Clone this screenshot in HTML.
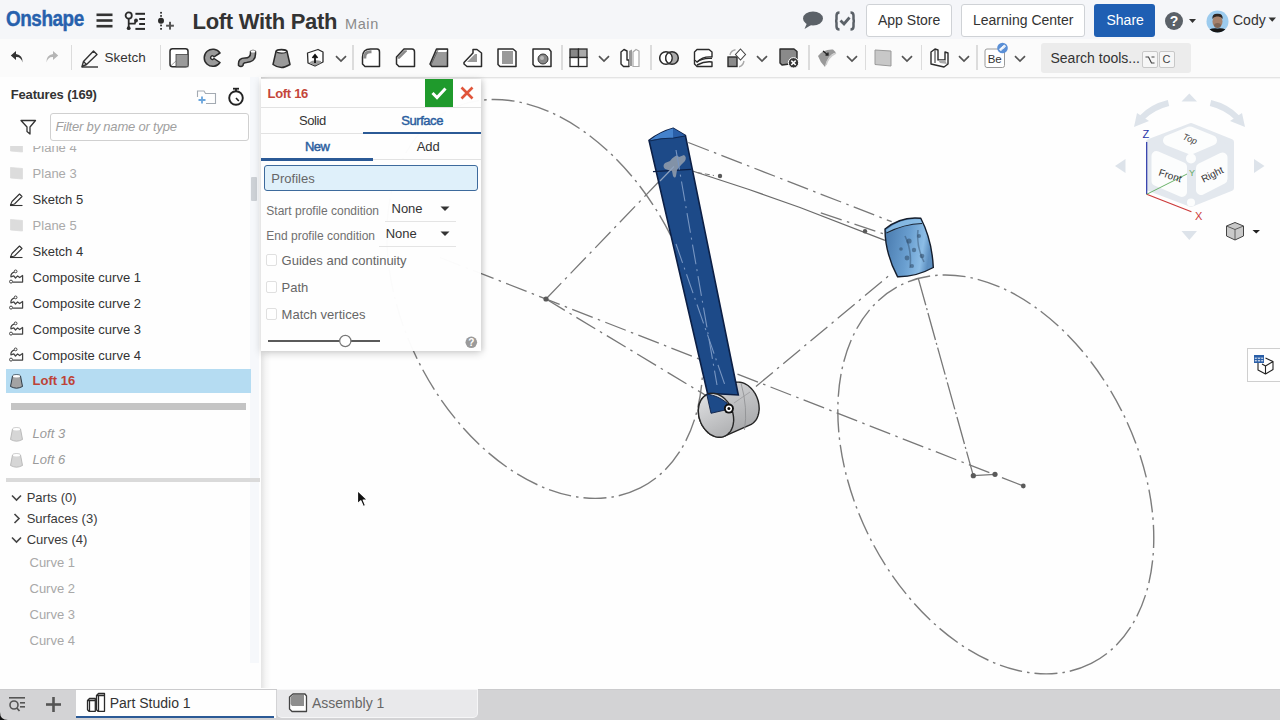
<!DOCTYPE html><html><head><meta charset="utf-8"><style>
*{margin:0;padding:0;box-sizing:border-box}
html,body{width:1280px;height:720px;overflow:hidden;background:#fefefe;font-family:"Liberation Sans", sans-serif;}
.t{position:absolute;white-space:nowrap;}
</style></head><body>

<svg style="position:absolute;left:0;top:0" width="1280" height="720" viewBox="0 0 1280 720"><ellipse cx="544.8" cy="298.9" rx="211.8" ry="141" transform="rotate(63.2 544.8 298.9)" fill="none" stroke="#7c7c7c" stroke-width="1.4" stroke-dasharray="23 5 2.5 5"/><ellipse cx="995.8" cy="474.4" rx="211.8" ry="141" transform="rotate(63.2 995.8 474.4)" fill="none" stroke="#7c7c7c" stroke-width="1.4" stroke-dasharray="23 5 2.5 5"/><line x1="440" y1="257.5" x2="1023.3" y2="486" stroke="#777" stroke-width="1.3" stroke-dasharray="22 5.5 2.5 5.5"/><line x1="546" y1="299" x2="728.7" y2="409.2" stroke="#777" stroke-width="1.3" stroke-dasharray="22 5.5 2.5 5.5"/><line x1="546" y1="299" x2="673" y2="167" stroke="#777" stroke-width="1.3" stroke-dasharray="22 5.5 2.5 5.5"/><line x1="688.3" y1="142.5" x2="891.7" y2="221.7" stroke="#777" stroke-width="1.3" stroke-dasharray="22 5.5 2.5 5.5"/><polyline points="692.5,171 749,189.5 800,207.5 885,240.4" fill="none" stroke="#6a6a6a" stroke-width="1.3"/><line x1="697" y1="172.5" x2="714" y2="175.5" stroke="#777" stroke-width="1" stroke-dasharray="5 3"/><line x1="820.8" y1="212.9" x2="890" y2="236" stroke="#777" stroke-width="1.3" stroke-dasharray="22 5.5 2.5 5.5"/><line x1="728.7" y1="409.2" x2="891.7" y2="273.3" stroke="#777" stroke-width="1.3" stroke-dasharray="22 5.5 2.5 5.5"/><line x1="918.3" y1="278.3" x2="973.3" y2="475.7" stroke="#777" stroke-width="1.3" stroke-dasharray="28 3 2 3"/><line x1="973.3" y1="475.7" x2="995" y2="474.3" stroke="#777" stroke-width="1.3" stroke-dasharray="none"/><circle cx="546" cy="299" r="2.6" fill="#5a5a5a"/><circle cx="720" cy="176" r="2.2" fill="#5a5a5a"/><circle cx="865" cy="231.25" r="2.2" fill="#5a5a5a"/><circle cx="973.3" cy="475.7" r="2.6" fill="#5a5a5a"/><circle cx="995" cy="474.3" r="2.6" fill="#5a5a5a"/><circle cx="1023.3" cy="486" r="2.4" fill="#5a5a5a"/><defs><linearGradient id="cyl" x1="0" y1="0" x2="0.3" y2="1"><stop offset="0" stop-color="#d6d7d9"/><stop offset="1" stop-color="#a8a9ab"/></linearGradient><linearGradient id="cyf" x1="0" y1="0" x2="0.4" y2="1"><stop offset="0" stop-color="#e2e3e5"/><stop offset="1" stop-color="#b4b5b7"/></linearGradient></defs><path d="M698.3 410.7 L698.4 409.2 L698.6 407.8 L698.8 406.3 L699.1 405.0 L699.5 403.6 L700.0 402.4 L700.5 401.2 L701.1 400.0 L701.8 399.0 L702.6 398.0 L703.5 397.1 L704.3 396.3 L705.3 395.6 L706.3 394.9 L707.4 394.4 L732.9 383.1 L734.0 382.7 L735.1 382.4 L736.2 382.2 L737.4 382.1 L738.6 382.1 L739.9 382.2 L741.1 382.4 L742.3 382.7 L743.6 383.1 L744.8 383.7 L746.0 384.3 L747.2 385.0 L748.3 385.8 L749.4 386.7 L750.5 387.7 L751.5 388.8 L752.5 389.9 L753.5 391.1 L754.3 392.4 L755.2 393.7 L755.9 395.1 L756.6 396.5 L757.2 398.0 L757.7 399.5 L758.2 401.0 L758.5 402.5 L758.8 404.0 L759.0 405.6 L759.1 407.1 L759.2 408.6 L759.1 410.1 L758.9 411.5 L758.7 413.0 L758.4 414.3 L758.0 415.7 L757.5 416.9 L757.0 418.1 L756.4 419.3 L755.7 420.3 L754.9 421.3 L754.0 422.2 L753.2 423.0 L752.2 423.7 L751.2 424.4 L750.1 424.9 L724.6 436.2 L723.5 436.6 L722.4 436.9 L721.3 437.1 L720.1 437.2 L718.9 437.2 L717.6 437.1 L716.4 436.9 L715.2 436.6 L713.9 436.2 L712.7 435.6 L711.5 435.0 L710.3 434.3 L709.2 433.5 L708.1 432.6 L707.0 431.6 L706.0 430.5 L705.0 429.4 L704.0 428.2 L703.2 426.9 L702.3 425.6 L701.6 424.2 L700.9 422.8 L700.3 421.3 L699.8 419.8 L699.3 418.3 L699.0 416.8 L698.7 415.3 L698.5 413.7 L698.4 412.2 Z" fill="url(#cyl)" stroke="#262626" stroke-width="1.4"/><path d="M741 383 Q748 408 744.5 430" fill="none" stroke="#8d8e90" stroke-width="0.8"/><path d="M734 403 L750 392" fill="none" stroke="#9a9b9d" stroke-width="0.8"/><path d="M649 140.4 Q660 132 673.3 128.3 L685.4 135.4 L738.3 395 L707.5 393.3 Z" fill="#1d4a88" stroke="#0c1f45" stroke-width="1.6"/><path d="M649.5 140.4 Q660 132 673.3 128.3 L673.5 138 Q660 138 649.5 140.4 Z" fill="#4482cc"/><path d="M673.3 128.3 L685.4 135.4 L673.5 138 Z" fill="#2a5fa8"/><path d="M649.5 141 Q661 138 673.5 138 L685 136" fill="none" stroke="#0f2a55" stroke-width="1.2"/><path d="M653 171.6 L691 169.3" stroke="#0c1f45" stroke-width="1.3"/><path d="M684 155 Q687 157 685 161 L682 164 Q679 167 677 170 L676 176 Q675 179 673 176 L672 171 Q668 170 665 169 Q662 166 665 163 L670 161 Q672 158 674 157 Q677 154 679 157 Z" fill="#8e9aab" opacity="0.9"/><line x1="660" y1="181" x2="674" y2="166.5" stroke="#8fa3bf" stroke-width="1.1"/><line x1="676" y1="150" x2="717" y2="385" stroke="#7896c2" stroke-width="1.1" stroke-dasharray="20 5 2 5"/><line x1="676" y1="244" x2="726" y2="388" stroke="#7896c2" stroke-width="1.1" stroke-dasharray="20 5 2 5"/><path d="M731.7 409.3 L732.2 410.8 L732.7 412.3 L733.0 413.8 L733.3 415.3 L733.5 416.9 L733.6 418.4 L733.7 419.9 L733.6 421.4 L733.4 422.8 L733.2 424.3 L732.9 425.6 L732.5 427.0 L732.0 428.2 L731.5 429.4 L730.9 430.6 L730.2 431.6 L729.4 432.6 L728.5 433.5 L727.7 434.3 L726.7 435.0 L725.7 435.7 L724.6 436.2 L723.5 436.6 L722.4 436.9 L721.3 437.1 L720.1 437.2 L718.9 437.2 L717.6 437.1 L716.4 436.9 L715.2 436.6 L713.9 436.2 L712.7 435.6 L711.5 435.0 L710.3 434.3 L709.2 433.5 L708.1 432.6 L707.0 431.6 L706.0 430.5 L705.0 429.4 L704.0 428.2 L703.2 426.9 L702.3 425.6 L701.6 424.2 L700.9 422.8 L700.3 421.3 L699.8 419.8 L699.3 418.3 L699.0 416.8 L698.7 415.3 L698.5 413.7 L698.4 412.2 L698.3 410.7 L698.4 409.2 L698.6 407.8 L698.8 406.3 L699.1 405.0 L699.5 403.6 L700.0 402.4 L700.5 401.2 L701.1 400.0 L701.8 399.0 L702.6 398.0 L703.5 397.1 L704.3 396.3 L705.3 395.6 L706.3 394.9 L707.4 394.4 L708.5 394.0 L709.6 393.7 L710.7 393.5 L711.9 393.4 L713.1 393.4 L714.4 393.5 L715.6 393.7 L716.8 394.0 L718.1 394.4 L719.3 395.0 L720.5 395.6 L721.7 396.3 L722.8 397.1 L723.9 398.0 L725.0 399.0 L726.0 400.1 L727.0 401.2 L728.0 402.4 L728.8 403.7 L729.7 405.0 L730.4 406.4 L731.1 407.8 Z" fill="url(#cyf)" stroke="#262626" stroke-width="1.4"/><path d="M706.7 394 Q718 395.5 727 403 L728.7 409.2 L711 413.3 Z" fill="#1d4a88" stroke="#0c1f45" stroke-width="0.9"/><circle cx="728.9" cy="408.6" r="5" fill="#111"/><circle cx="728.9" cy="408.6" r="3.1" fill="#fff"/><circle cx="728.9" cy="408.6" r="1.5" fill="#111"/><defs><linearGradient id="bg1" x1="0" y1="0" x2="1" y2="0.2"><stop offset="0" stop-color="#4677ab"/><stop offset="0.55" stop-color="#6a9fd0"/><stop offset="0.85" stop-color="#8cbde6"/><stop offset="1" stop-color="#5d8fc0"/></linearGradient></defs><path d="M885 229 Q901 216 920.8 218.3 Q932 240 933.3 267.5 Q916 277 897.5 276.7 Q885 253 885 229 Z" fill="url(#bg1)" stroke="#141d2c" stroke-width="1.4"/><path d="M886 230 Q901 217.5 920 219.5 Q921.5 222 922 224 Q904 224 887.5 233.5 Z" fill="#8fc2ea" opacity="0.8"/><path d="M886.5 233 Q904 224 922 223.5" fill="none" stroke="#1a2536" stroke-width="1.2"/><g fill="#2f4a66" opacity="0.55"><circle cx="909" cy="241" r="2.6"/><circle cx="914" cy="250" r="2.2"/><circle cx="907" cy="258" r="2.4"/><circle cx="919" cy="236" r="2"/><circle cx="922" cy="256" r="2.3"/><circle cx="912" cy="266" r="2"/><circle cx="901" cy="249" r="1.8"/></g><path d="M905 236 Q912 250 910 268 M918 230 Q916 246 924 262" fill="none" stroke="#2f4a66" stroke-width="1.6" opacity="0.45"/></svg>
<div style="position:absolute;left:0px;top:0px;width:1280px;height:39px;background:#f5f6f9;"></div>
<div class="t" style="left:6.0px;top:8.22px;font-size:21px;line-height:21px;color:#2761ad;font-weight:bold;font-style:normal;letter-spacing:-0.5px;-webkit-text-stroke:0.4px #2761ad;transform:scale(0.9,1.08);transform-origin:0 21px;">Onshape</div>
<svg style="position:absolute;left:96px;top:13px;" width="17" height="15" viewBox="0 0 17 15"><rect x="0.5" y="0.5" width="16" height="2.6" fill="#333"/><rect x="0.5" y="6.2" width="16" height="2.6" fill="#333"/><rect x="0.5" y="11.9" width="16" height="2.6" fill="#333"/></svg>
<svg style="position:absolute;left:124px;top:11px;" width="23" height="20" viewBox="0 0 23 20"><circle cx="4.7" cy="4.5" r="3.1" fill="none" stroke="#2a2a2a" stroke-width="1.8"/><path d="M4.7 7.5 L4.7 17" stroke="#2a2a2a" stroke-width="1.8"/><circle cx="4.7" cy="17.2" r="1.9" fill="#2a2a2a"/><path d="M4.7 12.6 L10.8 12.6 L11.8 9.5" fill="none" stroke="#2a2a2a" stroke-width="1.8"/><circle cx="12" cy="9.5" r="1.9" fill="#2a2a2a"/><rect x="11.4" y="1.8" width="9.6" height="2" fill="#2a2a2a"/><rect x="15.2" y="7" width="5.8" height="2" fill="#2a2a2a"/><rect x="15.2" y="12" width="5.8" height="2" fill="#2a2a2a"/><rect x="11.4" y="16.9" width="9.6" height="2" fill="#2a2a2a"/></svg>
<svg style="position:absolute;left:156px;top:10px;" width="20" height="21" viewBox="0 0 20 21"><circle cx="5" cy="10.8" r="3" fill="#2a2a2a"/><rect x="4.2" y="1.9" width="1.7" height="1.7" fill="#222"/><rect x="4.2" y="5.1" width="1.7" height="1.7" fill="#222"/><rect x="4.2" y="14.6" width="1.7" height="1.7" fill="#222"/><rect x="4.2" y="18" width="1.7" height="1.7" fill="#222"/><rect x="10.1" y="14.7" width="7.8" height="2" fill="#555"/><rect x="13" y="11.8" width="2" height="7.8" fill="#555"/></svg>
<div class="t" style="left:192.5px;top:10.78px;font-size:22px;line-height:22px;color:#333;font-weight:bold;font-style:normal;letter-spacing:-0.3px;">Loft With Path</div>
<div class="t" style="left:345.0px;top:16.93px;font-size:14.5px;line-height:14.5px;color:#8a8a8a;font-weight:normal;font-style:normal;letter-spacing:0.6px;">Main</div>
<svg style="position:absolute;left:802px;top:11px;" width="22" height="19" viewBox="0 0 22 19"><ellipse cx="11" cy="7.5" rx="10" ry="7" fill="#5b6168"/><path d="M5 12 L2.5 18 L10 13.5 Z" fill="#5b6168"/></svg>
<svg style="position:absolute;left:834px;top:11px;" width="22" height="20" viewBox="0 0 22 20"><path d="M5.5 1.5 Q2.5 1.5 2.5 4.5 L2.5 8 Q2.5 10 1 10 Q2.5 10 2.5 12 L2.5 15.5 Q2.5 18.5 5.5 18.5" fill="none" stroke="#5b6168" stroke-width="2.5"/><path d="M16.5 1.5 Q19.5 1.5 19.5 4.5 L19.5 8 Q19.5 10 21 10 Q19.5 10 19.5 12 L19.5 15.5 Q19.5 18.5 16.5 18.5" fill="none" stroke="#5b6168" stroke-width="2.5"/><path d="M6.5 9.5 L10 13 L15.5 6.5" fill="none" stroke="#5b6168" stroke-width="2.8"/></svg>
<div style="position:absolute;left:865.5px;top:3.5px;width:86px;height:33px;background:#fff;border:1px solid #cfd2d6;border-radius:3px;"></div>
<div class="t" style="left:878.0px;top:13.45px;font-size:14px;line-height:14px;color:#333;font-weight:normal;font-style:normal;">App Store</div>
<div style="position:absolute;left:960.5px;top:3.5px;width:124px;height:33px;background:#fff;border:1px solid #cfd2d6;border-radius:3px;"></div>
<div class="t" style="left:973.0px;top:13.45px;font-size:14px;line-height:14px;color:#333;font-weight:normal;font-style:normal;">Learning Center</div>
<div style="position:absolute;left:1093.5px;top:3.5px;width:61.5px;height:33px;background:#1f5fb3;border-radius:3px;"></div>
<div class="t" style="left:1106.5px;top:13.45px;font-size:14px;line-height:14px;color:#fff;font-weight:normal;font-style:normal;">Share</div>
<svg style="position:absolute;left:1164px;top:11px;" width="34" height="20" viewBox="0 0 34 20"><circle cx="10" cy="10" r="9" fill="#5b6168"/><text x="10" y="15" font-family="Liberation Sans" font-weight="bold" font-size="14" fill="#fff" text-anchor="middle">?</text><path d="M25 8 L32 8 L28.5 12 Z" fill="#333"/></svg>
<svg style="position:absolute;left:1206px;top:10px;" width="24" height="23" viewBox="0 0 24 23"><defs><clipPath id="av"><circle cx="11.5" cy="11.5" r="11"/></clipPath></defs><circle cx="11.5" cy="11.5" r="11" fill="#9ccbee"/><g clip-path="url(#av)"><ellipse cx="11.5" cy="11.5" rx="5" ry="6.5" fill="#a7826c"/><path d="M6.3 9 Q6 3.5 11.5 3.8 Q17 3.5 16.7 9 Q15 6 11.5 6.5 Q8 6 6.3 9 Z" fill="#2e2622"/><ellipse cx="11.5" cy="15.5" rx="3.5" ry="2.5" fill="#5a4a40" opacity="0.5"/><path d="M-1 24 Q2 17.5 11.5 18.5 Q21 17.5 24 24 Z" fill="#161616"/></g></svg>
<div class="t" style="left:1233.0px;top:13.45px;font-size:14px;line-height:14px;color:#333;font-weight:normal;font-style:normal;">Cody</div>
<svg style="position:absolute;left:1268px;top:17px;" width="9" height="6" viewBox="0 0 9 6"><path d="M0.5 0.5 L8 0.5 L4.25 4.8 Z" fill="#333"/></svg>
<div style="position:absolute;left:0px;top:39px;width:1280px;height:39px;background:#fbfbfb;border-bottom:1px solid #e4e4e4;box-shadow:0 1px 1px rgba(0,0,0,0.04);"></div>
<svg style="position:absolute;left:10px;top:50px;" width="15" height="15" viewBox="0 0 15 15"><path d="M6 1 L0.8 5.5 L6 10 L6 7 Q11 6.5 12.5 12.5 Q13 5 6 4 Z" fill="#333"/></svg>
<svg style="position:absolute;left:44px;top:50px;" width="15" height="15" viewBox="0 0 15 15"><path d="M9 1 L14.2 5.5 L9 10 L9 7 Q4 6.5 2.5 12.5 Q2 5 9 4 Z" fill="#b5b5b5"/></svg>
<div style="position:absolute;left:70.5px;top:45px;width:1.5px;height:25px;background:#dcdcdc;"></div>
<svg style="position:absolute;left:80px;top:49px;" width="20" height="19" viewBox="0 0 20 19"><path d="M2 17.5 L3.5 12.5 L13.5 2 L17 5.5 L6.5 15.5 Z" fill="none" stroke="#333" stroke-width="1.4" stroke-linejoin="round"/><line x1="3.5" y1="12.5" x2="6.5" y2="15.5" stroke="#333" stroke-width="1.2"/><line x1="1.5" y1="18" x2="18" y2="18" stroke="#333" stroke-width="1.4"/></svg>
<div class="t" style="left:104.5px;top:51.37px;font-size:13.5px;line-height:13.5px;color:#333;font-weight:normal;font-style:normal;">Sketch</div>
<div style="position:absolute;left:159.5px;top:45px;width:1.5px;height:25px;background:#dcdcdc;"></div>
<svg style="position:absolute;left:169px;top:48px;" width="22" height="21" viewBox="0 0 22 21"><rect x="1" y="0.8" width="18" height="18" rx="2.5" fill="#fff" stroke="#2b2b2b" stroke-width="1.5"/><rect x="7" y="6.5" width="12" height="12.3" fill="#9a9a9a" stroke="#444" stroke-width="0.8"/><line x1="1.5" y1="18" x2="7" y2="13" stroke="#666" stroke-width="0.6"/></svg>
<svg style="position:absolute;left:203px;top:48px;" width="22" height="21" viewBox="0 0 22 21"><path d="M17 5 A8.6 8.6 0 1 0 17 14.5 L11 10.5 A1.8 1.8 0 1 1 11 8.8 Z" fill="#9a9a9a" stroke="#2b2b2b" stroke-width="1.5" stroke-linejoin="round"/></svg>
<svg style="position:absolute;left:236px;top:48px;" width="22" height="21" viewBox="0 0 22 21"><path d="M2.5 16.5 Q2 10 9 10 Q14.5 10 14.5 5 L14.5 3.5 Q17 1.5 19.5 3.5 L19.5 6 Q19.5 14 10.5 14.5 Q7 14.5 7 17.5 Q5 19.5 2.5 17.5 Z" fill="#9a9a9a" stroke="#2b2b2b" stroke-width="1.5" stroke-linejoin="round"/><ellipse cx="17" cy="3.4" rx="2.4" ry="1.2" fill="#fff"/></svg>
<svg style="position:absolute;left:271px;top:48px;" width="22" height="21" viewBox="0 0 22 21"><path d="M5 3.5 Q5 1.5 10.5 1.5 Q16 1.5 16 3.5 L19 16.5 Q14 19.5 10.5 19.5 Q6 19.5 2 16.5 Z" fill="#9a9a9a" stroke="#2b2b2b" stroke-width="1.5" stroke-linejoin="round"/><ellipse cx="10.5" cy="3.5" rx="5" ry="1.6" fill="#fff" stroke="#2b2b2b" stroke-width="1.1"/></svg>
<svg style="position:absolute;left:306px;top:48px;" width="22" height="21" viewBox="0 0 22 21"><path d="M1.5 5 L12 1.5 L17 4 L17 14 L9 18 L2 15 Z" fill="#fff" stroke="#2b2b2b" stroke-width="1.3" stroke-linejoin="round"/><path d="M3 14.5 Q8 11 15 13 L15 15 L9 17.5 Z" fill="#9a9a9a"/><path d="M9 15 L9 8 M6.5 10 L9 7 L11.5 10" fill="none" stroke="#111" stroke-width="1.8"/></svg>
<svg style="position:absolute;left:335px;top:55px;" width="12" height="8" viewBox="0 0 12 8"><path d="M1 1.2 L6 6 L11 1.2" fill="none" stroke="#555" stroke-width="1.7"/></svg>
<div style="position:absolute;left:352px;top:45px;width:1.5px;height:25px;background:#dcdcdc;"></div>
<svg style="position:absolute;left:361px;top:48px;" width="22" height="21" viewBox="0 0 22 21"><path d="M1.5 9 Q1.5 1 9.5 1 L16 1 Q18.5 1 18.5 4 L18.5 18.5 L4 18.5 L1.5 16 Z" fill="#fff" stroke="#2b2b2b" stroke-width="1.5" stroke-linejoin="round"/><path d="M2.3 9.5 Q2.3 2.3 9.5 2.3 L10.5 2.3 L10.5 5.3 L9.5 5.3 Q5.3 5.3 5.3 9.5 L5.3 10.5 L2.3 10.5 Z" fill="#8a8a8a"/></svg>
<svg style="position:absolute;left:395px;top:48px;" width="22" height="21" viewBox="0 0 22 21"><path d="M1.5 9 L9 1 L17 1 Q19.5 1 19.5 4 L19.5 18.5 L4 18.5 L1.5 16 Z" fill="#fff" stroke="#2b2b2b" stroke-width="1.5" stroke-linejoin="round"/><path d="M2.5 9.2 L9.3 2.3 L11.8 2.3 L11.8 3.5 L4.6 10.8 L2.5 10.8 Z" fill="#8a8a8a"/></svg>
<svg style="position:absolute;left:429px;top:48px;" width="22" height="21" viewBox="0 0 22 21"><path d="M1 16 L7.5 1 L18.5 1 L18.5 18.5 L3 18.5 Z" fill="#9a9a9a" stroke="#2b2b2b" stroke-width="1.5" stroke-linejoin="round"/><path d="M8 2 L18 2 L17.5 4 L7.5 4 Z" fill="#fff"/><line x1="2" y1="17" x2="9" y2="2" stroke="#555" stroke-width="0.8"/></svg>
<svg style="position:absolute;left:463px;top:48px;" width="22" height="21" viewBox="0 0 22 21"><path d="M1 14.5 L10 5 L10 1.5 L14 1.5 L18.5 5 L18.5 18.5 L4 18.5 L1 16 Z" fill="#fff" stroke="#2b2b2b" stroke-width="1.5" stroke-linejoin="round"/><path d="M4 14 L12 6 L14 6 L14 14 Z" fill="#9a9a9a"/></svg>
<svg style="position:absolute;left:497px;top:48px;" width="22" height="21" viewBox="0 0 22 21"><path d="M1 1 L16 1 L19 3.5 L19 18.5 L3 18.5 L1 16.5 Z" fill="#fff" stroke="#2b2b2b" stroke-width="1.5" stroke-linejoin="round"/><rect x="5" y="3" width="11" height="13" fill="#9a9a9a"/></svg>
<svg style="position:absolute;left:532px;top:48px;" width="22" height="21" viewBox="0 0 22 21"><path d="M1 1 L17 1 L19 3.5 L19 18.5 L3 18.5 L1 16.5 Z" fill="#fff" stroke="#2b2b2b" stroke-width="1.5" stroke-linejoin="round"/><circle cx="11" cy="11" r="5" fill="#888" stroke="#333" stroke-width="1"/><circle cx="10" cy="10" r="2" fill="#bbb"/></svg>
<div style="position:absolute;left:561px;top:45px;width:1.5px;height:25px;background:#dcdcdc;"></div>
<svg style="position:absolute;left:569px;top:48px;" width="22" height="21" viewBox="0 0 22 21"><rect x="1" y="1" width="8.5" height="8.5" fill="#888" stroke="#2b2b2b" stroke-width="1.3"/><rect x="9.5" y="1" width="8.5" height="8.5" fill="#aaa" stroke="#2b2b2b" stroke-width="1.3"/><rect x="1" y="9.5" width="8.5" height="9" fill="#fff" stroke="#2b2b2b" stroke-width="1.3"/><rect x="9.5" y="9.5" width="8.5" height="9" fill="#fff" stroke="#2b2b2b" stroke-width="1.3"/></svg>
<svg style="position:absolute;left:598px;top:55px;" width="12" height="8" viewBox="0 0 12 8"><path d="M1 1.2 L6 6 L11 1.2" fill="none" stroke="#555" stroke-width="1.7"/></svg>
<svg style="position:absolute;left:620px;top:48px;" width="22" height="21" viewBox="0 0 22 21"><path d="M1 4 L4 1.5 L7 3 L7 12 L9 12 L9 18.5 L3.5 18.5 L1 16 Z" fill="#fff" stroke="#2b2b2b" stroke-width="1.4" stroke-linejoin="round"/><path d="M9 3 L12 1.5 L12 18 L9 18 Z" fill="#999"/><path d="M13 4 L16 1.5 L19 3 L19 18.5 L13 18.5 Z" fill="#fff" stroke="#aaa" stroke-width="1.2"/></svg>
<div style="position:absolute;left:650px;top:45px;width:1.5px;height:25px;background:#dcdcdc;"></div>
<svg style="position:absolute;left:659px;top:48px;" width="22" height="21" viewBox="0 0 22 21"><circle cx="7" cy="10" r="6.3" fill="#fff" stroke="#2b2b2b" stroke-width="1.5"/><circle cx="13" cy="10" r="6.3" fill="#aaa" stroke="#2b2b2b" stroke-width="1.5"/><path d="M10 4.5 A6.3 6.3 0 0 1 10 15.5 A6.3 6.3 0 0 1 10 4.5" fill="#fff" stroke="#2b2b2b" stroke-width="1.3"/></svg>
<svg style="position:absolute;left:693px;top:48px;" width="22" height="21" viewBox="0 0 22 21"><path d="M1.5 4 L4 1.5 L16 1.5 L19 4 L19 9 Q10 8 4 14 L1.5 12 Z" fill="#fff" stroke="#2b2b2b" stroke-width="1.4" stroke-linejoin="round"/><path d="M1.5 12 L1.5 16 L4 18.5 L19 18.5 L19 14 Q12 13 4 17" fill="#fff" stroke="#2b2b2b" stroke-width="1.4" stroke-linejoin="round"/><path d="M4 14 Q10 9.5 19 10.5" fill="none" stroke="#2b2b2b" stroke-width="1.2"/></svg>
<svg style="position:absolute;left:727px;top:48px;" width="22" height="21" viewBox="0 0 22 21"><rect x="1" y="9" width="9" height="9.5" fill="#8a8a8a" stroke="#2b2b2b" stroke-width="1.4"/><path d="M13.5 1 L18.5 6.5 L13.5 12 L8.5 6.5 Z" fill="#fff" stroke="#444" stroke-width="1.1"/><path d="M3 7 Q4 2.5 8.5 1.8" fill="none" stroke="#aaa" stroke-width="1.4"/><path d="M17 13 Q16 18 12 18.8" fill="none" stroke="#aaa" stroke-width="1.4"/></svg>
<svg style="position:absolute;left:756px;top:55px;" width="12" height="8" viewBox="0 0 12 8"><path d="M1 1.2 L6 6 L11 1.2" fill="none" stroke="#555" stroke-width="1.7"/></svg>
<svg style="position:absolute;left:779px;top:48px;" width="22" height="21" viewBox="0 0 22 21"><path d="M1 1 L15 1 L18 3.5 L18 15 L3 17 L1 15 Z" fill="#8a8a8a" stroke="#2b2b2b" stroke-width="1.4" stroke-linejoin="round"/><circle cx="14.5" cy="14.8" r="5.2" fill="#333" stroke="#fff" stroke-width="1"/><path d="M12.3 12.6 L16.7 17 M16.7 12.6 L12.3 17" stroke="#fff" stroke-width="1.5"/></svg>
<div style="position:absolute;left:808px;top:45px;width:1.5px;height:25px;background:#dcdcdc;"></div>
<svg style="position:absolute;left:817px;top:48px;" width="22" height="21" viewBox="0 0 22 21"><path d="M1 8 Q6 1 16 1.5 L19 4.5 Q11 6 8 19 Q3 14 1 8 Z" fill="#999"/><path d="M6 3 L11 7 M8.5 7 L11 7 L11 4.5" fill="none" stroke="#222" stroke-width="1.3"/><path d="M9 17 Q11 9 19 5" fill="none" stroke="#ccc" stroke-width="1.5"/></svg>
<svg style="position:absolute;left:846px;top:55px;" width="12" height="8" viewBox="0 0 12 8"><path d="M1 1.2 L6 6 L11 1.2" fill="none" stroke="#555" stroke-width="1.7"/></svg>
<div style="position:absolute;left:864.5px;top:45px;width:1.5px;height:25px;background:#dcdcdc;"></div>
<svg style="position:absolute;left:874px;top:48px;" width="22" height="21" viewBox="0 0 22 21"><path d="M1 2 L17 3 L17 18 L1 16.5 Z" fill="#c8c8c8" stroke="#999" stroke-width="1"/></svg>
<svg style="position:absolute;left:901px;top:55px;" width="12" height="8" viewBox="0 0 12 8"><path d="M1 1.2 L6 6 L11 1.2" fill="none" stroke="#555" stroke-width="1.7"/></svg>
<div style="position:absolute;left:920.5px;top:45px;width:1.5px;height:25px;background:#dcdcdc;"></div>
<svg style="position:absolute;left:929px;top:48px;" width="22" height="21" viewBox="0 0 22 21"><path d="M2 4 L6 1 L9 2 L9 12 L16 12 L16 4 L19 5 L19 16 L15 19 L2 16 Z" fill="#fff" stroke="#2b2b2b" stroke-width="1.4" stroke-linejoin="round"/><path d="M9 12 L16 12 L18 16 L11 15 Z" fill="#aaa"/><line x1="6" y1="1" x2="6" y2="15" stroke="#2b2b2b" stroke-width="1"/></svg>
<svg style="position:absolute;left:958px;top:55px;" width="12" height="8" viewBox="0 0 12 8"><path d="M1 1.2 L6 6 L11 1.2" fill="none" stroke="#555" stroke-width="1.7"/></svg>
<div style="position:absolute;left:976px;top:45px;width:1.5px;height:25px;background:#dcdcdc;"></div>
<svg style="position:absolute;left:984px;top:41px;" width="24" height="28" viewBox="0 0 24 28"><rect x="1" y="8" width="19.5" height="18.5" rx="2" fill="#fff" stroke="#9a9a9a" stroke-width="1"/><text x="10.7" y="22" font-family="Liberation Sans" font-size="11.5" fill="#333" text-anchor="middle">Be</text><circle cx="18.5" cy="7" r="5.3" fill="#5a8fd6"/><path d="M16.2 8.8 L20.8 4.8" stroke="#fff" stroke-width="1.2"/><ellipse cx="17.3" cy="7.9" rx="1.8" ry="1.1" transform="rotate(-40 17.3 7.9)" fill="none" stroke="#fff" stroke-width="0.9"/><ellipse cx="19.8" cy="5.8" rx="1.8" ry="1.1" transform="rotate(-40 19.8 5.8)" fill="none" stroke="#fff" stroke-width="0.9"/></svg>
<svg style="position:absolute;left:1014px;top:55px;" width="12" height="8" viewBox="0 0 12 8"><path d="M1 1.2 L6 6 L11 1.2" fill="none" stroke="#555" stroke-width="1.7"/></svg>
<div style="position:absolute;left:1041px;top:43px;width:150px;height:30px;background:#ececec;border-radius:3px;"></div>
<div class="t" style="left:1050.5px;top:50.65px;font-size:14px;line-height:14px;color:#333;font-weight:normal;font-style:normal;">Search tools...</div>
<div style="position:absolute;left:1141.5px;top:50.5px;width:16px;height:17px;background:#f6f6f6;border:1px solid #c8c8c8;border-radius:2px;"></div>
<svg style="position:absolute;left:1142.5px;top:51.5px;" width="14" height="15" viewBox="0 0 14 15"><path d="M2.5 5 L5.5 5 L8.5 11 L11.5 11 M8.5 5 L11.5 5" fill="none" stroke="#444" stroke-width="1.2"/></svg>
<div style="position:absolute;left:1158.5px;top:50.5px;width:16px;height:17px;background:#f6f6f6;border:1px solid #c8c8c8;border-radius:2px;"></div>
<div class="t" style="left:1162.5px;top:53.69px;font-size:11px;line-height:11px;color:#444;font-weight:normal;font-style:normal;">C</div>
<div style="position:absolute;left:0px;top:77px;width:261px;height:611px;background:#fefefe;"></div>
<div style="position:absolute;left:261px;top:77px;width:10px;height:611px;background:linear-gradient(90deg,rgba(0,0,0,0.10),rgba(0,0,0,0.03) 50%,rgba(0,0,0,0));"></div>
<div style="position:absolute;left:250px;top:77px;width:9px;height:586px;background:#f6f8fb;"></div>
<div class="t" style="left:10.7px;top:88.40px;font-size:13px;line-height:13px;color:#333;font-weight:bold;font-style:normal;letter-spacing:-0.15px;">Features (169)</div>
<svg style="position:absolute;left:196px;top:89px;" width="21" height="16" viewBox="0 0 21 16"><path d="M1.5 8 L1.5 2 L8 2 L9.5 4.5 L19.5 4.5 L19.5 14.5 L10 14.5" fill="none" stroke="#a3aab2" stroke-width="1.1"/><path d="M6 7.5 L6 14.5 M2.5 11 L9.5 11" stroke="#6aa5dc" stroke-width="1.8"/></svg>
<svg style="position:absolute;left:227px;top:87px;" width="18" height="19" viewBox="0 0 18 19"><circle cx="9" cy="11" r="6.8" fill="none" stroke="#222" stroke-width="1.9"/><rect x="6" y="0.8" width="6" height="1.8" fill="#222"/><rect x="8.1" y="2" width="1.8" height="2.5" fill="#222"/><path d="M9 11 L11.8 14" stroke="#222" stroke-width="1.6"/></svg>
<svg style="position:absolute;left:20px;top:119px;" width="17" height="17" viewBox="0 0 17 17"><path d="M1 1.5 L15.5 1.5 L10 8 L10 15 L7 12.5 L7 8 Z" fill="none" stroke="#333" stroke-width="1.3" stroke-linejoin="round"/></svg>
<div style="position:absolute;left:49.5px;top:112.5px;width:199px;height:28.5px;background:#fff;border:1px solid #d0d0d0;border-radius:3px;"></div>
<div class="t" style="left:55.5px;top:120.40px;font-size:13px;line-height:13px;color:#a0a0a0;font-weight:normal;font-style:italic;letter-spacing:-0.2px;">Filter by name or type</div>
<div style="position:absolute;left:0;top:145.5px;width:252px;height:332px;overflow:hidden;">
<svg style="position:absolute;left:10px;top:-5.199999999999989px;" width="14" height="13" viewBox="0 0 14 13"><path d="M0.5 0.5 L12.5 1.5 L12.5 12 L0.5 11 Z" fill="#dcdcdc" stroke="#dcdcdc" stroke-width="0.8"/></svg>
<div class="t" style="left:32.6px;top:-4.70px;font-size:13px;line-height:13px;color:#aaa;font-weight:normal;font-style:normal;">Plane 4</div>
<svg style="position:absolute;left:10px;top:21.0px;" width="14" height="13" viewBox="0 0 14 13"><path d="M0.5 0.5 L12.5 1.5 L12.5 12 L0.5 11 Z" fill="#dcdcdc" stroke="#dcdcdc" stroke-width="0.8"/></svg>
<div class="t" style="left:32.6px;top:21.50px;font-size:13px;line-height:13px;color:#aaa;font-weight:normal;font-style:normal;">Plane 3</div>
<svg style="position:absolute;left:9px;top:47.0px;" width="15" height="14" viewBox="0 0 15 14"><path d="M1.5 12 L3 8.5 L10.5 1 L13 3.5 L5.5 11 Z" fill="none" stroke="#333" stroke-width="1.1" stroke-linejoin="round"/><line x1="1" y1="12.5" x2="13.5" y2="12.5" stroke="#333" stroke-width="1.1"/></svg>
<div class="t" style="left:32.6px;top:47.50px;font-size:13px;line-height:13px;color:#333;font-weight:normal;font-style:normal;">Sketch 5</div>
<svg style="position:absolute;left:10px;top:73.0px;" width="14" height="13" viewBox="0 0 14 13"><path d="M0.5 0.5 L12.5 1.5 L12.5 12 L0.5 11 Z" fill="#dcdcdc" stroke="#dcdcdc" stroke-width="0.8"/></svg>
<div class="t" style="left:32.6px;top:73.50px;font-size:13px;line-height:13px;color:#aaa;font-weight:normal;font-style:normal;">Plane 5</div>
<svg style="position:absolute;left:9px;top:99.0px;" width="15" height="14" viewBox="0 0 15 14"><path d="M1.5 12 L3 8.5 L10.5 1 L13 3.5 L5.5 11 Z" fill="none" stroke="#333" stroke-width="1.1" stroke-linejoin="round"/><line x1="1" y1="12.5" x2="13.5" y2="12.5" stroke="#333" stroke-width="1.1"/></svg>
<div class="t" style="left:32.6px;top:99.50px;font-size:13px;line-height:13px;color:#333;font-weight:normal;font-style:normal;">Sketch 4</div>
<svg style="position:absolute;left:9px;top:123.5px;" width="16" height="16" viewBox="0 0 16 16"><circle cx="6.6" cy="2.4" r="1.4" fill="none" stroke="#444" stroke-width="1"/><path d="M5.3 3.2 Q1.6 4.3 1.9 7.8 L4.8 6.9 L6.5 9 L8.6 6.9 L10.7 8.6 L13.6 6.5 L13.6 13 L3.6 13" fill="none" stroke="#444" stroke-width="1.25" stroke-linejoin="round"/><circle cx="2" cy="12.6" r="1.5" fill="none" stroke="#444" stroke-width="1"/></svg>
<div class="t" style="left:32.6px;top:125.50px;font-size:13px;line-height:13px;color:#333;font-weight:normal;font-style:normal;">Composite curve 1</div>
<svg style="position:absolute;left:9px;top:149.5px;" width="16" height="16" viewBox="0 0 16 16"><circle cx="6.6" cy="2.4" r="1.4" fill="none" stroke="#444" stroke-width="1"/><path d="M5.3 3.2 Q1.6 4.3 1.9 7.8 L4.8 6.9 L6.5 9 L8.6 6.9 L10.7 8.6 L13.6 6.5 L13.6 13 L3.6 13" fill="none" stroke="#444" stroke-width="1.25" stroke-linejoin="round"/><circle cx="2" cy="12.6" r="1.5" fill="none" stroke="#444" stroke-width="1"/></svg>
<div class="t" style="left:32.6px;top:151.50px;font-size:13px;line-height:13px;color:#333;font-weight:normal;font-style:normal;">Composite curve 2</div>
<svg style="position:absolute;left:9px;top:175.5px;" width="16" height="16" viewBox="0 0 16 16"><circle cx="6.6" cy="2.4" r="1.4" fill="none" stroke="#444" stroke-width="1"/><path d="M5.3 3.2 Q1.6 4.3 1.9 7.8 L4.8 6.9 L6.5 9 L8.6 6.9 L10.7 8.6 L13.6 6.5 L13.6 13 L3.6 13" fill="none" stroke="#444" stroke-width="1.25" stroke-linejoin="round"/><circle cx="2" cy="12.6" r="1.5" fill="none" stroke="#444" stroke-width="1"/></svg>
<div class="t" style="left:32.6px;top:177.50px;font-size:13px;line-height:13px;color:#333;font-weight:normal;font-style:normal;">Composite curve 3</div>
<svg style="position:absolute;left:9px;top:201.5px;" width="16" height="16" viewBox="0 0 16 16"><circle cx="6.6" cy="2.4" r="1.4" fill="none" stroke="#444" stroke-width="1"/><path d="M5.3 3.2 Q1.6 4.3 1.9 7.8 L4.8 6.9 L6.5 9 L8.6 6.9 L10.7 8.6 L13.6 6.5 L13.6 13 L3.6 13" fill="none" stroke="#444" stroke-width="1.25" stroke-linejoin="round"/><circle cx="2" cy="12.6" r="1.5" fill="none" stroke="#444" stroke-width="1"/></svg>
<div class="t" style="left:32.6px;top:203.50px;font-size:13px;line-height:13px;color:#333;font-weight:normal;font-style:normal;">Composite curve 4</div>
<div style="position:absolute;left:6px;top:223.5px;width:245px;height:24px;background:#b5dcf2;"></div>
<svg style="position:absolute;left:9px;top:228.39999999999998px;" width="15" height="15" viewBox="0 0 15 15"><path d="M3.5 2 Q3.5 0.8 7.5 0.8 Q11.5 0.8 11.5 2 L13.5 12.5 Q10 14.2 7.5 14.2 Q5 14.2 1.5 12.5 Z" fill="#a3a3a3" stroke="#2f3a44" stroke-width="1"/><ellipse cx="7.5" cy="2.2" rx="3.6" ry="1.2" fill="#fff"/></svg>
<div class="t" style="left:32.6px;top:228.90px;font-size:13px;line-height:13px;color:#bd4337;font-weight:bold;font-style:normal;">Loft 16</div>
<div style="position:absolute;left:11px;top:257.5px;width:235px;height:7px;background:#c4c4c4;"></div>
<svg style="position:absolute;left:9px;top:281.0px;" width="15" height="15" viewBox="0 0 15 15"><path d="M3.5 2 Q3.5 0.8 7.5 0.8 Q11.5 0.8 11.5 2 L13.5 12.5 Q10 14.2 7.5 14.2 Q5 14.2 1.5 12.5 Z" fill="#d6d6d6" stroke="#bbb" stroke-width="1"/><ellipse cx="7.5" cy="2.2" rx="3.6" ry="1.2" fill="#fff"/></svg>
<div class="t" style="left:32.6px;top:281.50px;font-size:13px;line-height:13px;color:#9a9a9a;font-weight:normal;font-style:italic;">Loft 3</div>
<svg style="position:absolute;left:9px;top:307.0px;" width="15" height="15" viewBox="0 0 15 15"><path d="M3.5 2 Q3.5 0.8 7.5 0.8 Q11.5 0.8 11.5 2 L13.5 12.5 Q10 14.2 7.5 14.2 Q5 14.2 1.5 12.5 Z" fill="#d6d6d6" stroke="#bbb" stroke-width="1"/><ellipse cx="7.5" cy="2.2" rx="3.6" ry="1.2" fill="#fff"/></svg>
<div class="t" style="left:32.6px;top:307.50px;font-size:13px;line-height:13px;color:#9a9a9a;font-weight:normal;font-style:italic;">Loft 6</div>
</div>
<div style="position:absolute;left:251px;top:177px;width:6px;height:24px;background:#cdd1d6;border-radius:1px;"></div>
<div style="position:absolute;left:6px;top:478px;width:254px;height:4px;background:#dadada;"></div>
<svg style="position:absolute;left:10.5px;top:493.5px;" width="12" height="8" viewBox="0 0 12 8"><path d="M1 1.5 L5.5 6 L10 1.5" fill="none" stroke="#444" stroke-width="1.6"/></svg>
<div class="t" style="left:26.7px;top:490.70px;font-size:13px;line-height:13px;color:#3a3a3a;font-weight:normal;font-style:normal;">Parts (0)</div>
<svg style="position:absolute;left:12.5px;top:512.5px;" width="8" height="12" viewBox="0 0 8 12"><path d="M1.5 1 L6 5.5 L1.5 10" fill="none" stroke="#444" stroke-width="1.6"/></svg>
<div class="t" style="left:26.7px;top:511.80px;font-size:13px;line-height:13px;color:#3a3a3a;font-weight:normal;font-style:normal;">Surfaces (3)</div>
<svg style="position:absolute;left:10.5px;top:535.5px;" width="12" height="8" viewBox="0 0 12 8"><path d="M1 1.5 L5.5 6 L10 1.5" fill="none" stroke="#444" stroke-width="1.6"/></svg>
<div class="t" style="left:26.7px;top:532.90px;font-size:13px;line-height:13px;color:#3a3a3a;font-weight:normal;font-style:normal;">Curves (4)</div>
<div class="t" style="left:29.5px;top:556.00px;font-size:13px;line-height:13px;color:#a8a8a8;font-weight:normal;font-style:normal;">Curve 1</div>
<div class="t" style="left:29.5px;top:582.00px;font-size:13px;line-height:13px;color:#a8a8a8;font-weight:normal;font-style:normal;">Curve 2</div>
<div class="t" style="left:29.5px;top:608.00px;font-size:13px;line-height:13px;color:#a8a8a8;font-weight:normal;font-style:normal;">Curve 3</div>
<div class="t" style="left:29.5px;top:634.00px;font-size:13px;line-height:13px;color:#a8a8a8;font-weight:normal;font-style:normal;">Curve 4</div>
<div style="position:absolute;left:261px;top:79px;width:220px;height:272px;background:rgba(254,254,254,0.975);box-shadow:0 2px 8px rgba(0,0,0,0.2), 3px 0 4px rgba(0,0,0,0.06);"></div>
<div class="t" style="left:267.5px;top:86.70px;font-size:13px;line-height:13px;color:#c4463a;font-weight:bold;font-style:normal;letter-spacing:-0.3px;">Loft 16</div>
<div style="position:absolute;left:425px;top:79px;width:28px;height:28px;background:#1f9a2c;"></div>
<svg style="position:absolute;left:425px;top:79px;" width="28" height="28" viewBox="0 0 28 28"><path d="M7.5 14 L12 18.5 L20.5 9.5" fill="none" stroke="#fff" stroke-width="3"/></svg>
<svg style="position:absolute;left:460px;top:86px;" width="14" height="14" viewBox="0 0 14 14"><path d="M1.5 1.5 L12.5 12.5 M12.5 1.5 L1.5 12.5" stroke="#e0553a" stroke-width="2.6"/></svg>
<div style="position:absolute;left:261px;top:107px;width:220px;height:1px;background:#e2e2e2;"></div>
<div class="t" style="left:299.0px;top:113.70px;font-size:13px;line-height:13px;color:#333;font-weight:normal;font-style:normal;letter-spacing:-0.4px;">Solid</div>
<div class="t" style="left:401.3px;top:113.70px;font-size:13px;line-height:13px;color:#2b5e9f;font-weight:normal;font-style:normal;-webkit-text-stroke:0.45px #2b5e9f;letter-spacing:-0.45px;">Surface</div>
<div style="position:absolute;left:261px;top:133px;width:220px;height:1px;background:#e2e2e2;"></div>
<div style="position:absolute;left:363px;top:132px;width:118px;height:2px;background:#2b5a96;"></div>
<div class="t" style="left:305.0px;top:139.70px;font-size:13px;line-height:13px;color:#2b5e9f;font-weight:normal;font-style:normal;-webkit-text-stroke:0.45px #2b5e9f;letter-spacing:-0.6px;">New</div>
<div class="t" style="left:416.7px;top:139.70px;font-size:13px;line-height:13px;color:#333;font-weight:normal;font-style:normal;">Add</div>
<div style="position:absolute;left:261px;top:159px;width:220px;height:1px;background:#e2e2e2;"></div>
<div style="position:absolute;left:261px;top:158px;width:112px;height:2.5px;background:#2b5a96;"></div>
<div style="position:absolute;left:264px;top:165px;width:214px;height:26px;background:#dff0fa;border:1px solid #3d6a9c;border-radius:3px;"></div>
<div class="t" style="left:271.3px;top:172.00px;font-size:13px;line-height:13px;color:#666;font-weight:normal;font-style:normal;">Profiles</div>
<div class="t" style="left:266.3px;top:205.14px;font-size:12px;line-height:12px;color:#707070;font-weight:normal;font-style:normal;">Start profile condition</div>
<div class="t" style="left:391.5px;top:201.60px;font-size:13px;line-height:13px;color:#333;font-weight:normal;font-style:normal;">None</div>
<svg style="position:absolute;left:440px;top:206px;" width="10" height="6" viewBox="0 0 10 6"><path d="M0.5 0.5 L9.5 0.5 L5 5 Z" fill="#333"/></svg>
<div style="position:absolute;left:384.5px;top:221px;width:71px;height:1px;background:#e4e4e4;"></div>
<div class="t" style="left:266.3px;top:229.54px;font-size:12px;line-height:12px;color:#707070;font-weight:normal;font-style:normal;">End profile condition</div>
<div class="t" style="left:385.7px;top:227.00px;font-size:13px;line-height:13px;color:#333;font-weight:normal;font-style:normal;">None</div>
<svg style="position:absolute;left:440px;top:231px;" width="10" height="6" viewBox="0 0 10 6"><path d="M0.5 0.5 L9.5 0.5 L5 5 Z" fill="#333"/></svg>
<div style="position:absolute;left:378.5px;top:246px;width:77px;height:1px;background:#e4e4e4;"></div>
<div style="position:absolute;left:265.5px;top:254px;width:11.5px;height:11.5px;background:#fff;border:1px solid #e0e0e0;border-radius:2px;"></div>
<div class="t" style="left:281.6px;top:254.00px;font-size:13px;line-height:13px;color:#666;font-weight:normal;font-style:normal;">Guides and continuity</div>
<div style="position:absolute;left:265.5px;top:281px;width:11.5px;height:11.5px;background:#fff;border:1px solid #e0e0e0;border-radius:2px;"></div>
<div class="t" style="left:281.6px;top:280.60px;font-size:13px;line-height:13px;color:#666;font-weight:normal;font-style:normal;">Path</div>
<div style="position:absolute;left:265.5px;top:308px;width:11.5px;height:11.5px;background:#fff;border:1px solid #e0e0e0;border-radius:2px;"></div>
<div class="t" style="left:281.6px;top:307.50px;font-size:13px;line-height:13px;color:#666;font-weight:normal;font-style:normal;">Match vertices</div>
<div style="position:absolute;left:268px;top:340px;width:112px;height:2px;background:#5a5a5a;"></div>
<svg style="position:absolute;left:338px;top:334px;" width="15" height="15" viewBox="0 0 15 15"><circle cx="7.3" cy="7" r="5.6" fill="#fff" stroke="#777" stroke-width="1.2"/></svg>
<svg style="position:absolute;left:465px;top:336px;" width="13" height="13" viewBox="0 0 13 13"><circle cx="6.3" cy="6.3" r="5.8" fill="#9a9a9a"/><text x="6.3" y="10.3" font-family="Liberation Sans" font-weight="bold" font-size="10" fill="#fff" text-anchor="middle">?</text></svg>
<svg style="position:absolute;left:1100px;top:80px;" width="180" height="180" viewBox="0 0 180 180">
<g fill="#dde3ea">
<path d="M89.3 13.5 L97 21.5 L81.5 21.5 Z"/>
<path d="M81.5 151 L97 151 L89.3 160 Z"/>
<path d="M15 86 L25.5 79 L25.5 93 Z"/>
<path d="M164.5 86 L154 79 L154 93 Z"/>
<path d="M34 47 L37 33 L49 41 Z"/>
<path d="M145 47 L142 33 L130 41 Z"/>
</g>
<g fill="none" stroke="#dde3ea" stroke-width="6">
<path d="M68.5 23 Q52 27 41.5 38"/>
<path d="M110.5 23 Q127 27 137.5 38"/>
</g>
<path d="M91 46 L131 62 L131 108 L91 124 L49 108 L49 62 Z" fill="#e3e8ee" stroke="#e3e8ee" stroke-width="6" stroke-linejoin="round"/>
<g fill="#fcfdfd" stroke="#fcfdfd" stroke-width="10" stroke-linejoin="round">
<path d="M68 60.5 L90 51.5 L112 60.5 L91 69.5 Z"/>
<path d="M56.5 76 L82 87 L82 112 L56.5 101 Z"/>
<path d="M101 88 L122.5 77.5 L122.5 99 L101 110 Z"/>
</g>
<circle cx="91" cy="78.5" r="5" fill="#fcfdfd"/>
<circle cx="91" cy="122.5" r="4" fill="#fcfdfd"/>
<path d="M46.7 114.3 L46.7 62" stroke="#2a36a8" stroke-width="1.2"/>
<path d="M46.7 114.3 L91.4 131.7" stroke="#cc3a3a" stroke-width="1.2"/>
<path d="M46.7 114.3 L87 94" stroke="#5aaa5a" stroke-width="0.9"/>
<text x="42.5" y="57.5" font-family="Liberation Sans" font-size="11" fill="#2a36a8">Z</text>
<text x="95" y="140" font-family="Liberation Sans" font-size="11" fill="#cc3a3a">X</text>
<text x="89" y="95.5" font-family="Liberation Sans" font-size="9" fill="#66aa66">Y</text>
<text x="90" y="62" font-family="Liberation Sans" font-size="9" fill="#444" font-style="italic" text-anchor="middle" transform="rotate(22 90 59)">Top</text>
<text x="70.3" y="99" font-family="Liberation Sans" font-size="10" fill="#333" text-anchor="middle" transform="rotate(18 70.3 95.5)">Front</text>
<text x="112" y="98" font-family="Liberation Sans" font-size="10" fill="#333" text-anchor="middle" transform="rotate(-27 112 94)">Right</text>
<path d="M126.5 146 L135 142.5 L143.5 146 L143.5 156 L135 160 L126.5 156 Z" fill="#c9c9c9" stroke="#444" stroke-width="1"/>
<path d="M126.5 146 L135 149.5 L143.5 146 M135 149.5 L135 160" fill="none" stroke="#444" stroke-width="0.8"/>
<path d="M152.5 150 L160 150 L156.25 153.5 Z" fill="#222"/>
</svg>
<div style="position:absolute;left:1247px;top:348px;width:36px;height:34px;background:#fefefe;border:1px solid #cfcfcf;"></div>
<svg style="position:absolute;left:1253px;top:354px;" width="22" height="22" viewBox="0 0 22 22"><rect x="1" y="1" width="10" height="8" fill="#2a5fa8"/><path d="M1.8 4.2 L10.2 4.2 M1.8 6.8 L10.2 6.8" stroke="#fff" stroke-width="1"/><path d="M4.3 3.5 L4.3 8.5 M7.7 3.5 L7.7 8.5" stroke="#2a5fa8" stroke-width="1"/><path d="M12.5 4 L20 7.5 L20 15.5 L12.5 20 L5 16 L5 9 M12.5 12 L20 7.5 M12.5 12 L12.5 20 M12.5 12 L9 10" fill="none" stroke="#222" stroke-width="1.1" stroke-linejoin="round"/></svg>
<div style="position:absolute;left:0px;top:688.5px;width:1280px;height:31.5px;background:#d3d3d5;border-top:1px solid #cbcbcd;"></div>
<svg style="position:absolute;left:8px;top:696px;" width="18" height="17" viewBox="0 0 18 17"><rect x="1" y="1" width="16" height="1.6" fill="#555"/><circle cx="6" cy="9" r="4" fill="none" stroke="#555" stroke-width="1.6"/><path d="M8.8 12 L11.5 15" stroke="#555" stroke-width="1.8"/><rect x="12" y="6" width="5" height="1.6" fill="#555"/><rect x="12" y="10" width="5" height="1.6" fill="#555"/></svg>
<svg style="position:absolute;left:45px;top:696px;" width="18" height="17" viewBox="0 0 18 17"><rect x="1" y="7.2" width="15" height="2.6" fill="#555"/><rect x="7.2" y="1" width="2.6" height="15" fill="#555"/></svg>
<div style="position:absolute;left:76px;top:690px;width:200px;height:28px;background:#fefefe;"></div>
<div style="position:absolute;left:76px;top:716px;width:198px;height:2px;background:#2b5a96;"></div>
<svg style="position:absolute;left:86px;top:692px;" width="21" height="21" viewBox="0 0 21 21"><path d="M1.5 8.5 L3.5 6.5 L9.3 6.5 L9.3 19.3 L3 19.3 L1.5 17.8 Z M3.5 8.5 L9.3 8.5 M3.5 8.5 L3.5 19.3 M1.5 8.5 L3.5 8.5" fill="#fff" stroke="#2a2a2a" stroke-width="1.3" stroke-linejoin="round"/><path d="M10.5 3.5 L12.5 1.5 L18.5 1.5 L18.5 19.3 L12 19.3 L10.5 17.8 Z M12.5 3.5 L18.5 3.5 M12.5 3.5 L12.5 19.3 M10.5 3.5 L12.5 3.5" fill="#fff" stroke="#2a2a2a" stroke-width="1.3" stroke-linejoin="round"/></svg>
<div class="t" style="left:109.7px;top:695.75px;font-size:14px;line-height:14px;color:#333;font-weight:normal;font-style:normal;">Part Studio 1</div>
<div style="position:absolute;left:277px;top:689px;width:201px;height:28.5px;background:#e9e9eb;border-radius:0 0 5px 5px;border:1px solid #f6f6f7;border-left:none;"></div>
<svg style="position:absolute;left:288px;top:693px;" width="20" height="20" viewBox="0 0 20 20"><path d="M1.5 4 L5 1 L17 1 L18.5 3 L18.5 18.5 L4 18.5 L1.5 16 Z" fill="#fff" stroke="#444" stroke-width="1.3" stroke-linejoin="round"/><path d="M2.5 4 L5 2 L16 2 L16 13 L4 13 L2.5 11 Z" fill="#8e8e8e"/></svg>
<div class="t" style="left:312.0px;top:695.75px;font-size:14px;line-height:14px;color:#666;font-weight:normal;font-style:normal;">Assembly 1</div>
<svg style="position:absolute;left:0px;top:712px;" width="8" height="8" viewBox="0 0 8 8"><path d="M0 0 Q0 8 8 8 L0 8 Z" fill="#111"/></svg>
<svg style="position:absolute;left:355px;top:488px;" width="14" height="21" viewBox="0 0 14 21"><path d="M2.5 2.5 L2.5 16 L5.8 12.8 L8.3 18.5 L10.5 17.5 L8.2 12 L12.5 12 Z" fill="#111" stroke="#fff" stroke-width="1.2" stroke-linejoin="round"/></svg>
</body></html>
